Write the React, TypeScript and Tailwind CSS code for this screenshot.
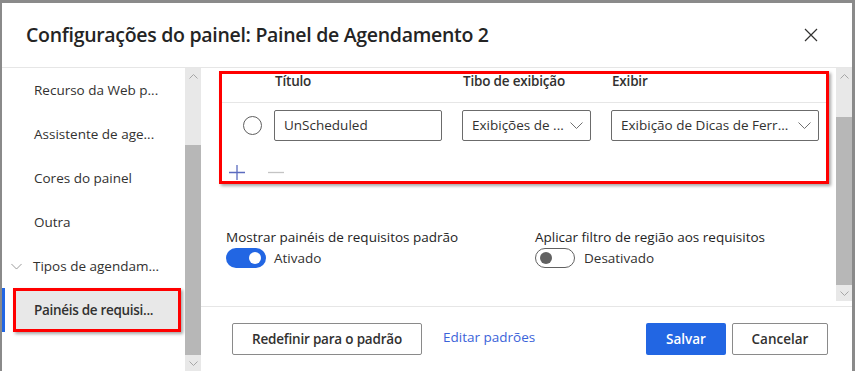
import React from "react";

const font = { fontFamily: '"Segoe UI", "Open Sans", "Noto Sans", sans-serif' };

function ChevronDown({ className = "" }: { className?: string }) {
  return (
    <svg className={className} width="13" height="7" viewBox="0 0 13 7" fill="none">
      <path d="M0.5 0.5 L6.5 6.5 L12.5 0.5" stroke="currentColor" strokeWidth="1" />
    </svg>
  );
}

function ChevronUpSmall() {
  return (
    <svg width="9" height="5" viewBox="0 0 9 5" fill="none">
      <path d="M0.5 4.5 L4.5 0.5 L8.5 4.5" stroke="#a6a6a6" strokeWidth="1" />
    </svg>
  );
}
function ChevronDownSmall() {
  return (
    <svg width="9" height="5" viewBox="0 0 9 5" fill="none">
      <path d="M0.5 0.5 L4.5 4.5 L8.5 0.5" stroke="#a6a6a6" strokeWidth="1" />
    </svg>
  );
}

function Scrollbar({ top, thumb, height }: { top: number; thumb: number; height: number }) {
  return (
    <div className="w-[16px] flex flex-col shrink-0 bg-[#e8e8e8] self-start" style={{ height }}>
      <div className="h-[16px] flex items-center justify-center">
        <ChevronUpSmall />
      </div>
      <div style={{ height: top }} />
      <div className="bg-[#b7b7b7]" style={{ height: thumb }} />
      <div className="flex-1" />
      <div className="h-[16px] flex items-center justify-center">
        <ChevronDownSmall />
      </div>
    </div>
  );
}

const navItems = ["Recurso da Web p...", "Assistente de age...", "Cores do painel", "Outra"];

export default function App() {
  return (
    <div className="w-[855px] h-[371px] bg-[#8a8a8a] pt-[3px] pl-[2px] pr-[3px] overflow-hidden" style={font}>
      <div className="w-full h-[368px] bg-white flex flex-col text-[#323130]">
        {/* Header */}
        <div className="h-[65px] flex items-center justify-between pl-[24px] pr-[34px] border-b border-[#e6e6e6] shrink-0">
          <div className="text-[19.5px] font-semibold tracking-[-0.3px] text-[#242424] whitespace-nowrap">
            Configurações do painel: Painel de Agendamento 2
          </div>
          <svg width="14" height="14" viewBox="0 0 14 14" fill="none">
            <path d="M1 1 L13 13 M13 1 L1 13" stroke="#323130" strokeWidth="1.2" />
          </svg>
        </div>
        {/* Body */}
        <div className="flex flex-1 min-h-0">
          {/* Left nav */}
          <div className="w-[199px] flex shrink-0">
            <div className="flex-1 flex flex-col text-[13.5px]">
              {navItems.map((t) => (
                <div key={t} className="h-[44px] flex items-center pl-[32px] whitespace-nowrap">
                  {t}
                </div>
              ))}
              <div className="h-[44px] flex items-center pl-[9px] whitespace-nowrap">
                <ChevronDown className="text-[#8a8a8a] mr-[11px] w-[11px]" />
                Tipos de agendam...
              </div>
              <div className="h-[44px] flex items-center border-l-[3px] border-[#2266e3] pl-[8px]">
                <div className="w-[168px] h-[44px] border-[3px] border-[#ff0000] bg-[#e8e8e8] flex items-center pl-[18px] font-semibold tracking-[-0.3px] whitespace-nowrap shadow-[2px_2px_3px_rgba(0,0,0,0.35)]">
                  Painéis de requisi...
                </div>
              </div>
            </div>
            <Scrollbar top={61} thumb={210} height={303} />
          </div>
          {/* Right */}
          <div className="flex-1 flex flex-col min-w-0">
            <div className="flex h-[239px] border-b border-[#e6e6e6] shrink-0">
              <div className="flex-1 flex flex-col pl-[18px] pt-[3px]">
                {/* Table box */}
                <div className="w-[610px] h-[113px] border-[3px] border-[#ff0000] shadow-[2px_2px_3px_rgba(0,0,0,0.35)] flex flex-col">
                  <div className="h-[29px] border-b border-[#e6e6e6] flex items-start text-[13.5px] leading-[14px] font-semibold tracking-[-0.2px]">
                    <div className="pl-[53px] w-[241px]">Título</div>
                    <div className="w-[149px]">Tibo de exibição</div>
                    <div>Exibir</div>
                  </div>
                  <div className="flex items-center h-[44px] text-[13.5px] whitespace-nowrap">
                    <div className="w-[19px] h-[19px] rounded-full border-[1.5px] border-[#5f5f5f] ml-[21px] mr-[12px]" />
                    <div className="w-[168px] h-[31px] border border-[#6b6b6b] rounded-[2px] flex items-center pl-[9px]">
                      UnScheduled
                    </div>
                    <div className="w-[129px] h-[31px] border border-[#6b6b6b] rounded-[2px] flex items-center justify-between pl-[9px] pr-[7px] ml-[20px]">
                      <span>Exibições de ...</span>
                      <ChevronDown className="text-[#707070]" />
                    </div>
                    <div className="w-[208px] h-[31px] border border-[#6b6b6b] rounded-[2px] flex items-center justify-between pl-[9px] pr-[7px] ml-[20px]">
                      <span>Exibição de Dicas de Ferr...</span>
                      <ChevronDown className="text-[#707070]" />
                    </div>
                  </div>
                  <div className="flex items-end flex-1 pl-[7px] gap-[23px] pb-[1px]">
                    <svg width="16" height="15" viewBox="0 0 16 15" fill="none">
                      <path d="M8 0 V15 M0 7.5 H16" stroke="#5b6bbf" strokeWidth="1.3" />
                    </svg>
                    <svg width="16" height="15" viewBox="0 0 16 15" fill="none">
                      <path d="M0 7.5 H16" stroke="#c4c4c4" strokeWidth="1.3" />
                    </svg>
                  </div>
                </div>
                {/* Toggles */}
                <div className="flex mt-[43px] pl-[7px] text-[13.5px] whitespace-nowrap">
                  <div className="w-[309px]">
                    <div className="text-[#242424] leading-[20px]">Mostrar painéis de requisitos padrão</div>
                    <div className="flex items-center mt-[1px]">
                      <div className="w-[40px] h-[20px] rounded-full bg-[#2266e3] flex items-center justify-end pr-[5px]">
                        <div className="w-[12px] h-[12px] rounded-full bg-white" />
                      </div>
                      <span className="ml-[8px]">Ativado</span>
                    </div>
                  </div>
                  <div>
                    <div className="text-[#242424] leading-[20px]">Aplicar filtro de região aos requisitos</div>
                    <div className="flex items-center mt-[1px]">
                      <div className="w-[40px] h-[20px] rounded-full border border-[#616161] flex items-center pl-[4px]">
                        <div className="w-[12px] h-[12px] rounded-full bg-[#616161]" />
                      </div>
                      <span className="ml-[9px]">Desativado</span>
                    </div>
                  </div>
                </div>
              </div>
              <Scrollbar top={33} thumb={168} height={233} />
            </div>
            {/* Footer */}
            <div className="flex-1 flex items-center pl-[31px] pr-[24px] text-[13.5px] whitespace-nowrap">
              <div className="h-[32px] w-[190px] border border-[#8a8a8a] rounded-[2px] flex items-center justify-center font-semibold tracking-[-0.2px]">
                Redefinir para o padrão
              </div>
              <div className="ml-[21px] text-[#3b63d9] mb-[3px]">Editar padrões</div>
              <div className="flex-1" />
              <div className="h-[32px] w-[80px] bg-[#2266e3] text-white rounded-[2px] flex items-center justify-center font-semibold">
                Salvar
              </div>
              <div className="h-[32px] w-[96px] ml-[6px] border border-[#8a8a8a] rounded-[2px] flex items-center justify-center font-semibold">
                Cancelar
              </div>
            </div>
          </div>
        </div>
      </div>
    </div>
  );
}
